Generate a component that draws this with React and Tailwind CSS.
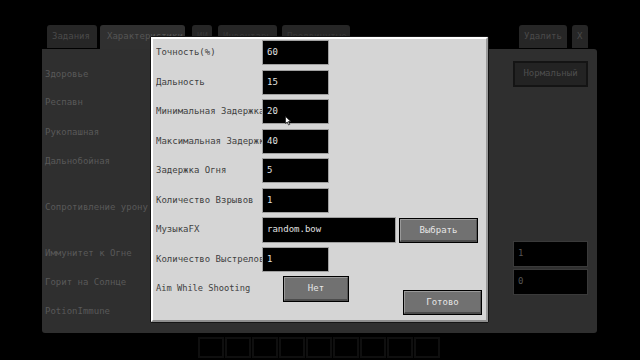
import React from 'react';

const Tab = ({ label, className = '', active = false, dim = false }) => (
  <div
    className={`h-[23px] rounded-t-[3px] px-[5px] pt-[6px] text-[9px] leading-[10px] whitespace-nowrap overflow-hidden ${
      active ? 'bg-[#303030] text-[#555555] h-[24px]' : 'bg-[#262626] mb-px'
    } ${dim ? 'text-[#363636]' : active ? '' : 'text-[#4a4a4a]'} ${className}`}
  >
    {label}
  </div>
);

const Field = ({ value, className = 'w-[67px] h-[25px]' }) => (
  <div
    className={`relative shrink-0 bg-black border border-[#a0a0a0] pl-[4px] flex items-center text-[9px] text-[#e0e0e0] ${className}`}
  >
    {value}
  </div>
);

const McButton = ({ label, className = '' }) => (
  <div
    className={`relative shrink-0 border border-black bg-[#717171] flex items-center justify-center text-[9px] text-[#e6e6e6] ${className}`}
  >
    <div className="absolute inset-0 border-t border-l border-[#999999] border-b-2 border-r border-b-[#4c4c4c] border-r-[#555555]" />
    <span className="relative">{label}</span>
  </div>
);

const Row = ({ label, children, className = 'h-[25px]' }) => (
  <div className={`flex items-start ${className}`}>
    <div className="w-[106px] shrink-0 self-stretch flex items-center whitespace-nowrap overflow-hidden text-[9px] text-[#3f3f3f]">
      {label}
    </div>
    {children}
  </div>
);

const bgLabels = [
  ['Здоровье', 'mt-[20px]'],
  ['Респавн', 'mt-[18px]'],
  ['Рукопашная', 'mt-[20px]'],
  ['Дальнобойная', 'mt-[19px]'],
  ['Сопротивление урону', 'mt-[36px]'],
  ['Иммунитет к Огне', 'mt-[36px]'],
  ['Горит на Солнце', 'mt-[19px]'],
  ['PotionImmune', 'mt-[19px]'],
];

export default function App() {
  return (
    <div className="relative w-[640px] h-[360px] bg-black overflow-hidden font-['DejaVu_Sans_Mono',monospace]">
      {/* NPC editor behind the dialog */}
      <div className="pt-[25px] pl-[42px] w-[597px] flex flex-col">
        <div className="flex items-end h-[24px]">
          <Tab label="Задания" className="ml-[5px] w-[50px]" />
          <Tab label="Характеристики" active className="ml-[3px] w-[85px] pl-[7px]" />
          <Tab label="ИИ" dim className="ml-[7px] w-[20px]" />
          <Tab label="Инвентарь" dim className="ml-[6px] w-[59px]" />
          <Tab label="Продвинутые" dim className="ml-[5px] w-[68px]" />
          <Tab label="Удалить" className="ml-[169px] w-[48px]" />
          <Tab label="X" className="ml-[5px] w-[16px] px-[4px]" />
        </div>
        <div className="h-[284px] bg-[#2f2f2f] rounded-b-[3px] rounded-tr-[3px] flex">
          <div className="flex flex-col pl-[3px]">
            {bgLabels.map(([t, m]) => (
              <div key={t} className={`h-[10px] leading-[10px] text-[9px] text-[#595959] whitespace-nowrap ${m}`}>
                {t}
              </div>
            ))}
          </div>
          <div className="ml-auto mr-[9px] pt-[12px] flex flex-col w-[75px]">
            <div className="h-[26px] bg-[#232323] border-2 border-[#141414] flex items-center justify-center text-[9px] text-[#4e4e4e]">
              Нормальный
            </div>
            <div className="mt-[154px] h-[26px] bg-black border border-[#3a3a3a] pl-[4px] flex items-center text-[9px] text-[#555]">
              1
            </div>
            <div className="mt-[2px] h-[26px] bg-black border border-[#3a3a3a] pl-[4px] flex items-center text-[9px] text-[#555]">
              0
            </div>
          </div>
        </div>
        <div className="mt-[4px] ml-[156px] flex gap-[1px]">
          {Array.from({ length: 9 }).map((_, i) => (
            <div key={i} className="w-[26px] h-[21px] border-2 border-[#0f0f0f]" />
          ))}
        </div>
      </div>

      {/* Ranged settings dialog */}
      <div className="absolute left-[150px] top-[36px] w-[339px] h-[287px] border border-[#151515] rounded-[2px]">
        <div className="h-full bg-[#d5d5d5] border-2 border-t-white border-l-white border-b-[#8e8e8e] border-r-[#9a9a9a] pl-[3px] flex flex-col">
          <Row label="Точность(%)" className="h-[25px] mt-[1px]">
            <Field value="60" />
          </Row>
          <Row label="Дальность" className="h-[25px] mt-[5px]">
            <Field value="15" />
          </Row>
          <Row label="Минимальная Задержка" className="h-[25px] mt-[4px]">
            <Field value="20" />
          </Row>
          <Row label="Максимальная Задержка" className="h-[25px] mt-[5px]">
            <Field value="40" />
          </Row>
          <Row label="Задержка Огня" className="h-[25px] mt-[4px]">
            <Field value="5" />
          </Row>
          <Row label="Количество Взрывов" className="h-[25px] mt-[5px]">
            <Field value="1" />
          </Row>
          <Row label="МузыкаFX" className="h-[26px] mt-[4px]">
            <Field value="random.bow" className="w-[134px] h-[26px]" />
            <McButton label="Выбрать" className="ml-[3px] mt-px w-[79px] h-[25px]" />
          </Row>
          <Row label="Количество Выстрелов" className="h-[25px] mt-[4px]">
            <Field value="1" />
          </Row>
          <div className="flex items-start mt-[4px]">
            <div className="w-[106px] h-[26px] shrink-0 flex items-center whitespace-nowrap text-[8.7px] text-[#3f3f3f]">
              Aim While Shooting
            </div>
            <McButton label="Нет" className="ml-[21px] w-[66px] h-[26px]" />
            <McButton label="Готово" className="ml-[54px] mt-[14px] w-[79px] h-[25px]" />
          </div>
        </div>
      </div>

      {/* mouse pointer */}
      <svg className="absolute left-[285px] top-[116px]" width="7" height="10" viewBox="0 0 7 10">
        <path d="M0.5 0.5 L0.5 7.5 L2.2 6 L3.6 9 L4.8 8.4 L3.4 5.5 L5.8 5.5 Z" fill="white" stroke="#222" strokeWidth="0.8" />
      </svg>
    </div>
  );
}
